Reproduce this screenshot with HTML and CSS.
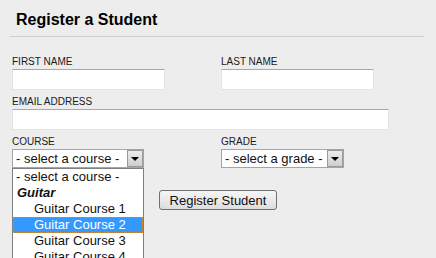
FILE: index.html
```html
<!DOCTYPE html>
<html lang="en">
<head>
  <meta charset="UTF-8">
  <title>Register a Student</title>
  <link rel="stylesheet" href="styles.css">
</head>
<body>

<h2 class="title">Register a Student</h2>

<form class="register">
  <div class="row two">
    <div class="field">
      <label>FIRST NAME</label>
      <div class="text-input"></div>
    </div>
    <div class="field">
      <label>LAST NAME</label>
      <div class="text-input"></div>
    </div>
  </div>

  <div class="row">
    <div class="field">
      <label>EMAIL ADDRESS</label>
      <div class="text-input wide"></div>
    </div>
  </div>

  <div class="row two">
    <div class="field">
      <label>COURSE</label>
      <div class="select course">
        <span class="select-text">- select a course -</span>
        <span class="select-btn"><i class="arrow"></i></span>
        <!-- open dropdown list -->
        <ul class="dropdown">
          <li>- select a course -</li>
          <li class="group">Guitar</li>
          <li class="sub">Guitar Course 1</li>
          <li class="sub active">Guitar Course 2</li>
          <li class="sub">Guitar Course 3</li>
          <li class="sub">Guitar Course 4</li>
        </ul>
      </div>
    </div>
    <div class="field">
      <label>GRADE</label>
      <div class="select grade">
        <span class="select-text">- select a grade -</span>
        <span class="select-btn"><i class="arrow"></i></span>
      </div>
    </div>
  </div>

  <div class="actions">
    <button type="button" class="btn">Register Student</button>
  </div>
</form>

</body>
</html>
```

FILE: styles.css
```css
/* page */
html {
  height: 100%;
}

body {
  margin: 0;
  min-height: 100%;
  overflow: hidden;
  background-color: #ededed;
  color: #111;
  font-family: "Liberation Sans", Arial, sans-serif;
}

.title {
  margin: 0 12px 0 10px;
  padding: 11px 6px 7px;
  font-size: 16px;
  line-height: 18px;
  font-weight: bold;
  color: #000;
  border-bottom: 1px solid #cfcfcf;
}

.register {
  padding: 19px 0 0 12px;
}

.row {
  margin-bottom: 6px;
}

.row.two {
  display: grid;
  grid-template-columns: 209px 1fr;
}

label {
  display: block;
  font-size: 10px;
  line-height: 12px;
  margin-bottom: 1px;
  color: #1a1a1a;
}

.text-input {
  box-sizing: border-box;
  width: 153px;
  height: 21px;
  background-color: #fff;
  border: 1px solid #e4e4e4;
  border-top-color: #a8a8a8;
}

.text-input.wide {
  width: 377px;
}

/* fake select boxes */
.select {
  position: relative;
  box-sizing: border-box;
  display: flex;
  align-items: stretch;
  height: 19px;
  background-color: #fff;
  border: 1px solid #a5a5a5;
  font-size: 13px;
}

.select.course {
  width: 132px;
}

.select.grade {
  width: 123px;
}

.select-text {
  flex: 1;
  padding-left: 3px;
  line-height: 17px;
  white-space: nowrap;
  overflow: hidden;
}

.select-btn {
  box-sizing: border-box;
  width: 16px;
  display: flex;
  align-items: center;
  justify-content: center;
  border: 1px solid #9a9a9a;
  background: linear-gradient(#ececec, #cfcfcf);
}

.arrow {
  width: 0;
  height: 0;
  border-left: 4px solid transparent;
  border-right: 4px solid transparent;
  border-top: 4px solid #000;
}

.dropdown {
  position: absolute;
  top: 18px;
  left: -1px;
  width: 132px;
  box-sizing: border-box;
  margin: 0;
  padding: 0;
  list-style: none;
  background-color: #fff;
  border: 1px solid #808080;
  z-index: 2;
}

.dropdown li {
  height: 16px;
  line-height: 16px;
  padding-left: 3px;
  white-space: nowrap;
}

.dropdown .group {
  padding-left: 4px;
  font-weight: bold;
  font-style: italic;
}

.dropdown .sub {
  padding-left: 21px;
}

.dropdown .active {
  background-color: #3399ff;
  color: #fff;
  outline: 1px dotted #c98a3a;
  outline-offset: -1px;
}

/* submit */
.actions {
  padding: 16px 12px 0 0;
  text-align: center;
}

.btn {
  height: 20px;
  padding: 0 10px;
  font-family: "Liberation Sans", Arial, sans-serif;
  font-size: 13px;
  color: #111;
  border: 1px solid #707070;
  border-radius: 3px;
  background: linear-gradient(#f6f6f6, #dddddd);
}
```
